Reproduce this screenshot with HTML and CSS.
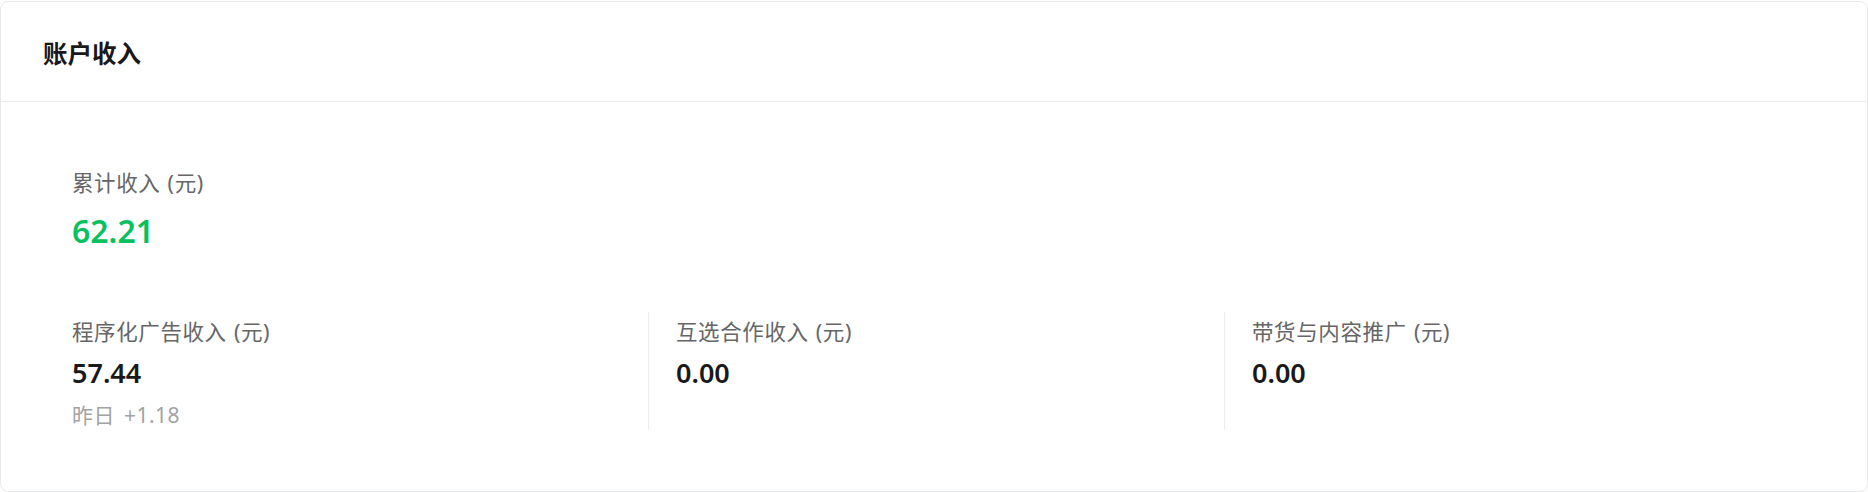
FILE: index.html
```html
<!DOCTYPE html>
<html lang="zh-CN">
<head>
<meta charset="utf-8">
<title>账户收入</title>
<link rel="stylesheet" href="styles.css">
</head>
<body>
<div class="page">
  <section class="card">
    <header class="card-header">
      <h2 class="card-title">账户收入</h2>
    </header>
    <div class="card-body">
      <div class="total">
        <div class="label">累计收入 (元)</div>
        <div class="total-value">62.21</div>
      </div>
      <div class="columns">
        <div class="col">
          <div class="label">程序化广告收入 (元)</div>
          <div class="value">57.44</div>
          <div class="delta">昨日 +1.18</div>
        </div>
        <div class="col col-split">
          <div class="label">互选合作收入 (元)</div>
          <div class="value">0.00</div>
        </div>
        <div class="col col-split">
          <div class="label">带货与内容推广 (元)</div>
          <div class="value">0.00</div>
        </div>
      </div>
    </div>
  </section>
</div>
</body>
</html>
```

FILE: styles.css
```css
* { box-sizing: border-box; }
html, body {
  margin: 0;
  padding: 0;
  background: #ffffff;
}
body {
  font-family: "Noto Sans", "Noto Sans CJK SC", sans-serif;
  color: #191919;
}
.page {
  padding-top: 1px;
}
.card {
  height: 491px;
  border: 1px solid #e8e9eb;
  border-radius: 8px;
  background: #fff;
  overflow: hidden;
}
.card-header {
  height: 100px;
  border-bottom: 1px solid #ebebeb;
  display: flex;
  align-items: center;
  padding-left: 42px;
  padding-top: 2px;
}
.card-title {
  margin: 0;
  font-size: 24.5px;
  font-weight: 700;
  color: #191919;
  font-family: "Noto Sans CJK SC", sans-serif;
}
.card-body {
  padding: 61px 67px 61px 71px;
}
.label {
  font-size: 21.5px;
  line-height: 40px;
  color: #666666;
  word-spacing: 1px;
  letter-spacing: 0.6px;
}
.total-value {
  font-size: 32px;
  line-height: 56px;
  font-weight: 600;
  color: #07c160;
}
.columns {
  margin-top: 53px;
  display: grid;
  grid-template-columns: repeat(3, 1fr);
}
.col {
  min-height: 118px;
}
.col-split {
  border-left: 1px solid #ededed;
  padding-left: 27px;
}
.value {
  font-size: 27px;
  line-height: 42px;
  font-weight: 600;
  color: #191919;
}
.delta {
  margin-top: 6px;
  font-size: 21px;
  line-height: 30px;
  color: #a3a3a3;
  word-spacing: 3px;
  letter-spacing: 0.5px;
}
```
